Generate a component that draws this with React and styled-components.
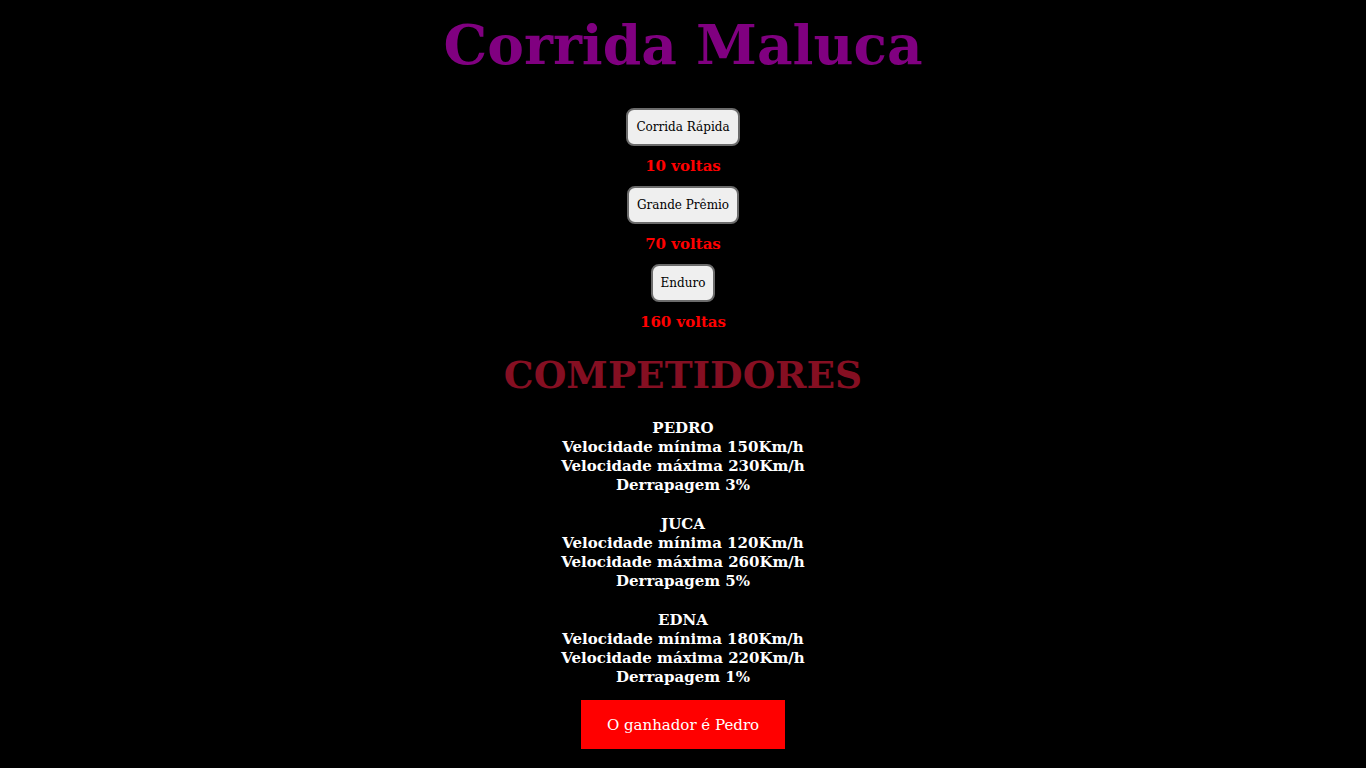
import React from "react";
import styled, { createGlobalStyle } from "styled-components";

const GlobalStyle = createGlobalStyle`
  body {
    margin: 0;
    background: #000;
    font-family: "DejaVu Serif", "Liberation Serif", serif;
  }
`;

const Page = styled.div`
  display: flex;
  flex-direction: column;
  align-items: center;
  min-height: 768px;
  background: #000;
  text-align: center;
`;

const Title = styled.h1`
  margin: 0 0 18px;
  height: 90px;
  line-height: 90px;
  font-size: 55px;
  font-weight: bold;
  color: #800080;
`;

const RaceButton = styled.button`
  height: 38px;
  padding: 0 8px;
  font-family: inherit;
  font-size: 12px;
  color: #000;
  background: #efefef;
  border: 2px solid #6b6b6b;
  border-radius: 8px;
`;

const Laps = styled.div`
  margin: 11px 0 10px;
  line-height: 19px;
  font-size: 15px;
  font-weight: bold;
  color: #ff0000;
`;

const Subtitle = styled.h2`
  margin: 10px 0 21px;
  line-height: 46px;
  font-size: 37.5px;
  font-weight: bold;
  color: #850f22;
`;

const Competitor = styled.div`
  margin-bottom: 20px;
  line-height: 19px;
  font-size: 15px;
  font-weight: bold;
  color: #fff;

  &:last-of-type {
    margin-bottom: 13px;
  }
`;

const WinnerButton = styled.button`
  width: 204px;
  height: 49px;
  font-family: inherit;
  font-size: 15px;
  color: #fff;
  background: #ff0000;
  border: none;
`;

const races = [
  { name: "Corrida Rápida", laps: 10 },
  { name: "Grande Prêmio", laps: 70 },
  { name: "Enduro", laps: 160 },
];

const competitors = [
  { name: "PEDRO", min: 150, max: 230, drift: 3 },
  { name: "JUCA", min: 120, max: 260, drift: 5 },
  { name: "EDNA", min: 180, max: 220, drift: 1 },
];

const App = () => {
  return (
    <Page>
      <GlobalStyle />
      <Title>Corrida Maluca</Title>
      {races.map((race) => (
        <React.Fragment key={race.name}>
          <RaceButton>{race.name}</RaceButton>
          <Laps>{race.laps} voltas</Laps>
        </React.Fragment>
      ))}
      <Subtitle>COMPETIDORES</Subtitle>
      {competitors.map((c) => (
        <Competitor key={c.name}>
          <div>{c.name}</div>
          <div>Velocidade mínima {c.min}Km/h</div>
          <div>Velocidade máxima {c.max}Km/h</div>
          <div>Derrapagem {c.drift}%</div>
        </Competitor>
      ))}
      <WinnerButton>O ganhador é Pedro</WinnerButton>
    </Page>
  );
};

export default App;
